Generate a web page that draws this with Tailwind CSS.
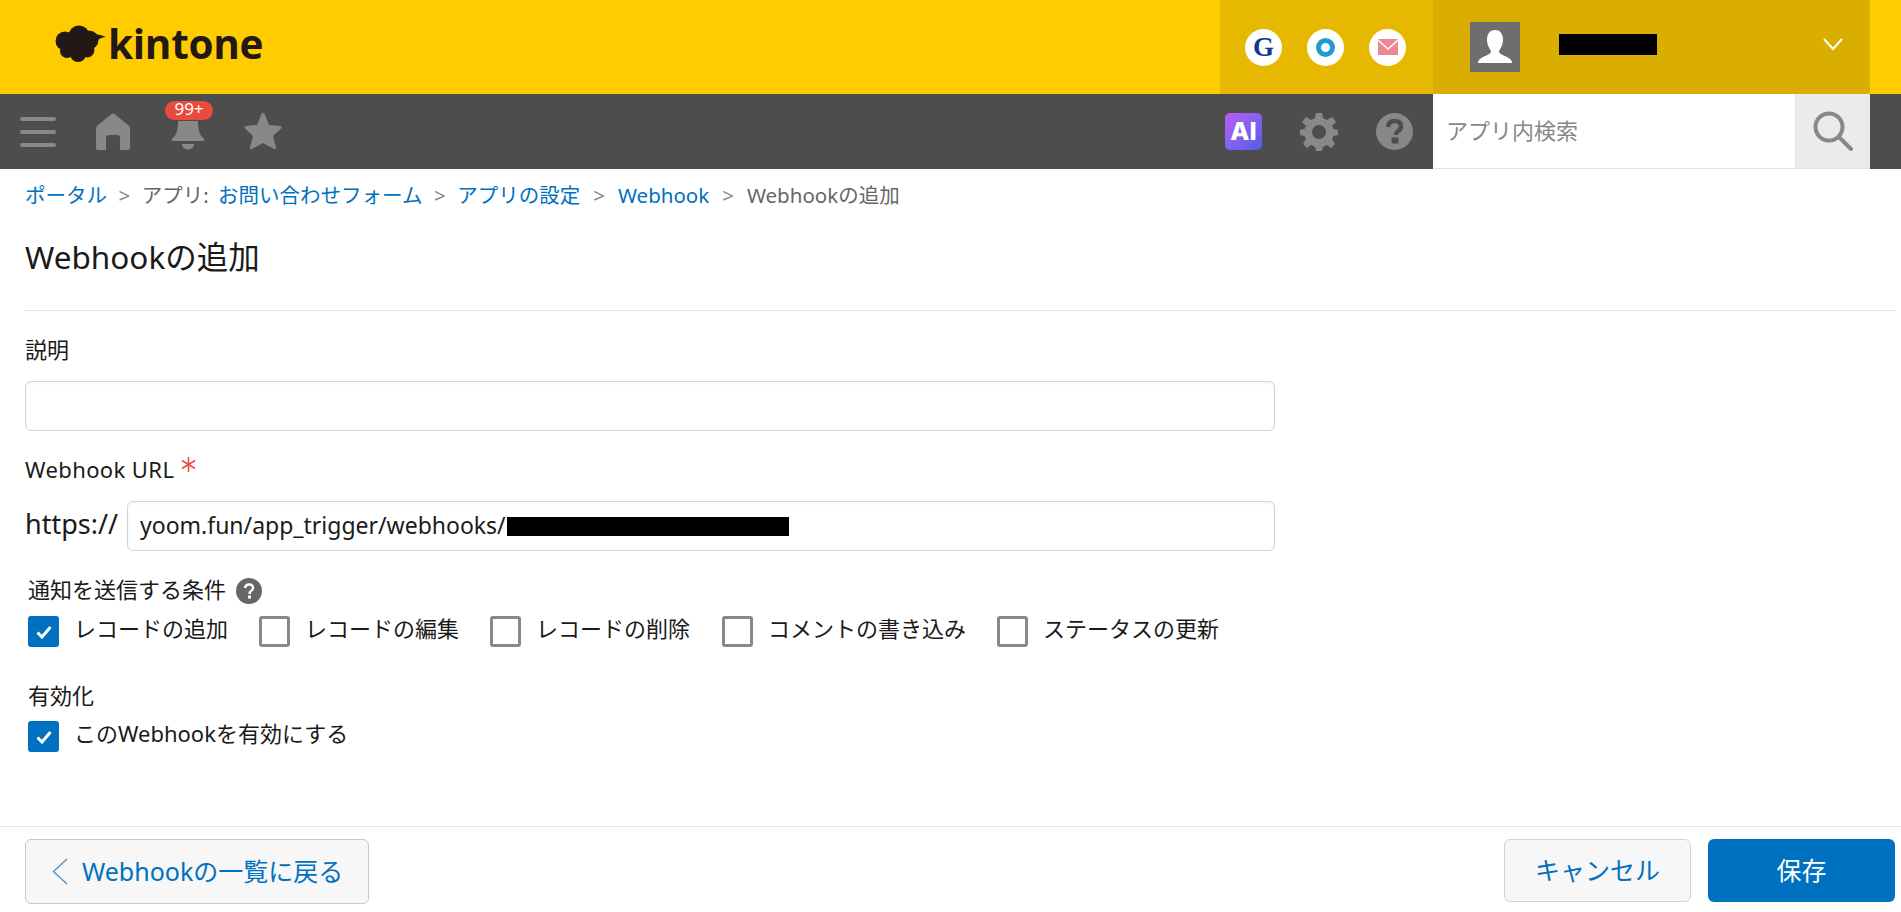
<!DOCTYPE html>
<html lang="ja">
<head>
<meta charset="utf-8">
<title>Webhookの追加</title>
<script src="https://cdn.jsdelivr.net/npm/@tailwindcss/browser@4"></script>
</head>
<body class="bg-white overflow-hidden font-['Noto_Sans','Noto_Sans_CJK_JP',sans-serif] text-[#1a1a1a]">
<div class="flex flex-col w-[1901px] h-[912px]">

  <header class="flex h-[94px] bg-[#ffcc00] shrink-0">
    <div class="flex items-center w-[1220px] pl-[55px] gap-[1px]">
      <svg class="w-[52px] h-[38px] -mt-[7px]" viewBox="0 0 52 38" fill="#231815">
        <circle cx="10" cy="16" r="9.5"/><circle cx="24" cy="11" r="10.5"/><circle cx="34" cy="15" r="9.5"/><circle cx="12" cy="26" r="7"/><circle cx="23" cy="29" r="8"/><circle cx="32" cy="25" r="7.5"/><circle cx="22" cy="19" r="11"/>
        <path d="M36 9 Q45 9 51 12 Q44 12 38 20Z"/>
      </svg>
      <span class="font-['Open_Sans'] font-bold text-[40.5px] leading-none text-[#231815] tracking-[-0.3px] -mt-[6px]">kintone</span>
    </div>
    <div class="flex items-center w-[213px] bg-[#e6b800] pl-[25px] gap-[25px]">
      <div class="flex items-center justify-center w-[37px] h-[37px] rounded-full bg-white"><span class="font-['Liberation_Serif'] font-bold text-[27px] leading-none text-[#0d3a8e]">G</span></div>
      <div class="flex items-center justify-center w-[37px] h-[37px] rounded-full bg-white"><div class="w-[19px] h-[19px] rounded-full border-[5px] border-[#1e9ad6]"></div></div>
      <div class="flex items-center justify-center w-[37px] h-[37px] rounded-full bg-white">
        <svg class="w-[20px] h-[16px]" viewBox="0 0 20 16"><rect width="20" height="16" fill="#ee8899"/><path d="M0 1 L10 10 L20 1" fill="none" stroke="#fff" stroke-width="1.5"/></svg>
      </div>
    </div>
    <div class="flex items-center w-[437px] bg-[#d9ae00] pl-[37px]">
      <div class="w-[50px] h-[50px] bg-[#6e6e6e] flex items-center justify-center">
        <svg class="w-[50px] h-[50px]" viewBox="0 0 50 50" fill="#fff"><path d="M25 8 C31 8 33 13 33 18 C33 23 30 27 29 29 C29 32 33 33 37 35 C40 36.500 42 38 42 41 L8 41 C8 38 10 36.500 13 35 C17 33 21 32 21 29 C20 27 17 23 17 18 C17 13 19 8 25 8Z"/></svg>
      </div>
      <div class="w-[98px] h-[21px] bg-black ml-[39px] -mt-[6px]"></div>
      <svg class="w-[20px] h-[13px] ml-[166px] -mt-[6px]" viewBox="0 0 20 13" fill="none" stroke="#fff" stroke-width="2"><path d="M1 1 L10 11 L19 1"/></svg>
    </div>
  </header>

  <nav class="flex h-[75px] bg-[#4d4d4d] shrink-0">
    <div class="flex items-center flex-1 relative">
      <div class="flex flex-col gap-[9px] w-[36px] ml-[20px]">
        <div class="h-[4px] rounded-full bg-[#888]"></div>
        <div class="h-[4px] rounded-full bg-[#888]"></div>
        <div class="h-[4px] rounded-full bg-[#888]"></div>
      </div>
      <svg class="w-[34px] h-[37px] ml-[40px]" viewBox="0 0 34 37" fill="#888"><path d="M15.500 1 Q17 0 18.500 1 L32 12 Q34 13.500 34 16 L34 35 Q34 37 32 37 L24 37 L24 25 Q24 22 21 22 L13 22 Q10 22 10 25 L10 37 L2 37 Q0 37 0 35 L0 16 Q0 13.500 2 12Z"/></svg>
      <div class="relative ml-[41px] w-[34px] h-[37px]">
        <svg class="w-[34px] h-[37px]" viewBox="0 0 34 37" fill="#888"><path d="M7 8 L27 8 C27 18 29 22 33 26 Q34 28 32 28 L2 28 Q0 28 1 26 C5 22 7 18 7 8Z"/><path d="M11 31 L23 31 Q23 36 17 36.500 Q11 36 11 31Z"/></svg>
        <span class="absolute -top-[12px] -left-[6px] w-[48px] h-[19px] rounded-full bg-[#e74c3c] text-white text-[17px] leading-[16px] text-center">99+</span>
      </div>
      <svg class="w-[38px] h-[37px] ml-[39px]" viewBox="0 0 38 37" fill="#888"><path d="M19 0 Q20.500 0 21 2 L25 12 L36 13 Q38.500 13.500 37 15.500 L29 23 L32 34.500 Q32.500 37 30 36 L19 30 L8 36 Q5.500 37 6 34.500 L9 23 L1 15.500 Q-0.500 13.500 2 13 L13 12 L17 2 Q17.500 0 19 0Z"/></svg>

      <div class="ml-auto mr-[20px] flex items-center">
        <div class="w-[37px] h-[37px] rounded-[5px] bg-linear-to-br from-[#b95cf6] to-[#4a5ee8] flex items-center justify-center"><span class="font-['Inter'] font-extrabold text-[25px] leading-none text-white">AI</span></div>
        <svg class="w-[38px] h-[38px] ml-[38px]" viewBox="0 0 38 38" fill="#888"><path fill-rule="evenodd" d="M16 0 L22 0 L23 5 L27 7 L32 4 L36 9 L32 13 L33.500 16 L38 17 L38 22 L33.500 23 L32 26 L35 31 L31 35 L27 32 L23 34 L22 38 L16 38 L15 34 L11 32 L7 35 L3 31 L6 26 L4.500 23 L0 22 L0 17 L4.500 16 L6 13 L2 9 L6 4 L11 7 L15 5Z M19 12 A7 7 0 1 0 19 26 A7 7 0 1 0 19 12Z"/></svg>
        <svg class="w-[37px] h-[37px] ml-[38px]" viewBox="0 0 37 37"><circle cx="18.500" cy="18.500" r="18.500" fill="#888"/><path d="M12 14 Q12.500 8 18.500 8 Q25 8 25 13.500 Q25 16.500 21.500 18.500 Q20 19.500 20 22" fill="none" stroke="#4d4d4d" stroke-width="4.500"/><rect x="15.500" y="24.500" width="7" height="6" fill="#4d4d4d"/></svg>
      </div>
    </div>
    <div class="flex w-[437px] mr-[31px] bg-white border-b border-[#e3e3e3]">
      <div class="flex-1 flex items-center pl-[13px] pb-[2px] text-[22px] text-[#888]">アプリ内検索</div>
      <div class="flex items-center justify-center w-[75px] bg-[#ebebeb] border-l border-[#e3e3e3]">
        <svg class="w-[40px] h-[40px]" viewBox="0 0 40 40" fill="none" stroke="#888" stroke-width="4"><circle cx="16" cy="16" r="13.500"/><path d="M26 26 L38 38" stroke-linecap="round"/></svg>
      </div>
    </div>
  </nav>

  <main class="flex-1 pl-[25px] pr-[6px]">
    <div class="flex items-center h-[54px] pb-[2px] text-[20.5px] text-[#666]">
      <a class="text-[#0070c0]">ポータル</a>
      <span class="mx-[11.5px] text-[#888]">&gt;</span>
      <span class="mr-[4px]">アプリ:&nbsp;</span><a class="text-[#0070c0]">お問い合わせフォーム</a>
      <span class="mx-[11.5px] text-[#888]">&gt;</span>
      <a class="text-[#0070c0]">アプリの設定</a>
      <span class="mx-[13px] text-[#888]">&gt;</span>
      <a class="text-[#0070c0]">Webhook</a>
      <span class="mx-[13px] text-[#888]">&gt;</span>
      <span>Webhookの追加</span>
    </div>
    <h1 class="mt-[15px] text-[31.5px] leading-[38px] pb-[2px] font-normal">Webhookの追加</h1>
    <hr class="mt-[32px] border-t border-[#e3e3e3]">

    <label class="block mt-[24px] text-[22px] leading-[28px] pb-[2px]">説明</label>
    <input type="text" class="block mt-[16px] w-[1250px] h-[50px] rounded-[6px] border border-[#d4d4d4] shadow-[inset_0_1px_3px_rgba(0,0,0,0.06)] bg-white">

    <div class="flex mt-[24px] text-[22px] leading-[28px] pb-[2px]">
      <span class="tracking-[0.4px]">Webhook URL</span>
      <svg class="w-[15px] h-[15px] ml-[7px] mt-[2px]" viewBox="0 0 15 15" fill="none" stroke="#e74c3c" stroke-width="1.500"><path d="M7.500 0 V15 M1 3.500 L14 11.500 M14 3.500 L1 11.500"/></svg>
    </div>
    <div class="flex items-center mt-[16px] w-[1250px]">
      <span class="text-[27px] leading-[46px] pb-[4px] w-[102px]">https://</span>
      <div class="relative flex-1">
        <input type="text" value="yoom.fun/app_trigger/webhooks/" class="block w-full h-[50px] pl-[12px] pb-[2px] text-[23px] rounded-[6px] border border-[#d4d4d4] shadow-[inset_0_1px_3px_rgba(0,0,0,0.06)] bg-white">
        <div class="absolute left-[380px] top-[16px] w-[282px] h-[19px] bg-black"></div>
      </div>
    </div>

    <div class="pl-[3px]">
      <div class="flex mt-[24px] text-[22px] leading-[28px] pb-[2px]">
        <span>通知を送信する条件</span>
        <svg class="w-[26px] h-[26px] ml-[10px] mt-[3px]" viewBox="0 0 26 26"><circle cx="13" cy="13" r="13" fill="#666"/><path d="M9 10 Q9.500 6.500 13 6.500 Q17 6.500 17 10 Q17 12 15 13 Q13.500 14 13.500 16" fill="none" stroke="#fff" stroke-width="2.500"/><rect x="12" y="17.500" width="3" height="3" fill="#fff"/></svg>
      </div>
      <div class="flex mt-[10px] text-[22px] leading-[25px]">
        <label class="flex gap-[15px] mr-[31px]">
          <span class="flex items-center justify-center w-[31px] h-[31px] rounded-[3px] bg-[#0070c0]"><svg class="w-[16px] h-[14px]" viewBox="0 0 16 14" fill="none" stroke="#fff" stroke-width="3"><path d="M1.500 7.500 L6 12 L14.500 2"/></svg></span>
          <span>レコードの追加</span>
        </label>
        <label class="flex gap-[15px] mr-[31px]">
          <span class="w-[31px] h-[31px] rounded-[3px] border-[3px] border-[#888]"></span>
          <span>レコードの編集</span>
        </label>
        <label class="flex gap-[15px] mr-[32px]">
          <span class="w-[31px] h-[31px] rounded-[3px] border-[3px] border-[#888]"></span>
          <span>レコードの削除</span>
        </label>
        <label class="flex gap-[15px] mr-[31px]">
          <span class="w-[31px] h-[31px] rounded-[3px] border-[3px] border-[#888]"></span>
          <span>コメントの書き込み</span>
        </label>
        <label class="flex gap-[15px]">
          <span class="w-[31px] h-[31px] rounded-[3px] border-[3px] border-[#888]"></span>
          <span>ステータスの更新</span>
        </label>
      </div>
      <div class="mt-[34px] text-[22px] leading-[28px] pb-[2px]">有効化</div>
      <label class="flex gap-[15px] mt-[10px] text-[22px] leading-[25px]">
        <span class="flex items-center justify-center w-[31px] h-[31px] rounded-[3px] bg-[#0070c0]"><svg class="w-[16px] h-[14px]" viewBox="0 0 16 14" fill="none" stroke="#fff" stroke-width="3"><path d="M1.500 7.500 L6 12 L14.500 2"/></svg></span>
        <span>このWebhookを有効にする</span>
      </label>
    </div>
  </main>

  <footer class="flex justify-between items-start h-[86px] shrink-0 border-t border-[#e3e3e3] pt-[12px] pl-[25px] pr-[6px]">
    <button class="flex items-center w-[344px] h-[65px] rounded-[6px] border border-[#c8c8c8] bg-[#f7f7f7] pl-[26px] text-[25px] text-[#0070c0]">
      <svg class="w-[16px] h-[27px] mr-[14px]" viewBox="0 0 16 27" fill="none" stroke="#4a9ad8" stroke-width="1.500"><path d="M15 1 L1.500 13.500 L15 26"/></svg>
      <span>Webhookの一覧に戻る</span>
    </button>
    <div class="flex gap-[17px]">
      <button class="w-[187px] h-[63px] rounded-[6px] border border-[#d4d4d4] bg-[#f7f7f7] text-[25px] text-[#0070c0]">キャンセル</button>
      <button class="w-[187px] h-[63px] rounded-[6px] bg-[#0070c0] text-[25px] text-white">保存</button>
    </div>
  </footer>
</div>
</body>
</html>
